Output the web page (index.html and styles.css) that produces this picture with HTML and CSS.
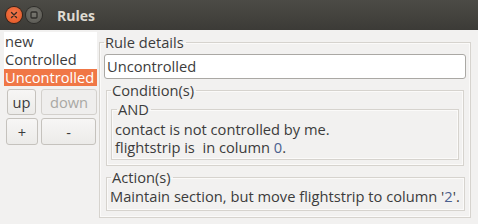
FILE: index.html
```html
<!DOCTYPE html>
<html>
<head>
<meta charset="utf-8">
<link rel="stylesheet" href="styles.css">
</head>
<body>
<div class="window">
  <div class="titlebar">
    <span class="wbtn close"><svg width="16" height="16" viewBox="0 0 16 16"><path d="M5.5 5.5 L10.5 10.5 M10.5 5.5 L5.5 10.5" stroke="#3a2a22" stroke-width="1.4" stroke-linecap="round"/></svg></span>
    <span class="wbtn mini"><svg width="16" height="16" viewBox="0 0 16 16"><rect x="5" y="5" width="6" height="6" rx="1" fill="none" stroke="#2e2d2a" stroke-width="1.3"/></svg></span>
    <span class="title">Rules</span>
  </div>
  <div class="content">
    <div class="left">
      <ul class="list">
        <li>new</li>
        <li>Controlled</li>
        <li class="sel">Uncontrolled</li>
      </ul>
      <div class="btnrow row1">
        <button class="btn b-up">up</button>
        <button class="btn b-down disabled">down</button>
      </div>
      <div class="btnrow row2">
        <button class="btn b-add">+</button>
        <button class="btn b-del">-</button>
      </div>
    </div>
    <fieldset class="frame details">
      <legend>Rule details</legend>
      <div class="entry">Uncontrolled</div>
      <fieldset class="frame cond">
        <legend>Condition(s)</legend>
        <fieldset class="frame andf">
          <legend>AND</legend>
          <div class="line">contact is not controlled by me.</div>
          <div class="line">flightstrip is&nbsp; in column <span class="num">0</span>.</div>
        </fieldset>
      </fieldset>
      <fieldset class="frame act">
        <legend>Action(s)</legend>
        <div class="line">Maintain section, but move flightstrip to column '<span class="num">2</span>'.</div>
      </fieldset>
    </fieldset>
  </div>
</div>
</body>
</html>
```
FILE: styles.css
```css
html, body {
  margin: 0;
  padding: 0;
}
body {
  width: 478px;
  height: 224px;
  overflow: hidden;
  background: #f2f1f0;
  font-family: "Open Sans", "DejaVu Sans", sans-serif;
  font-size: 14.67px;
  color: #3c3c3c;
}
.window {
  display: flex;
  flex-direction: column;
  height: 224px;
}
.titlebar {
  height: 30px;
  flex: none;
  display: flex;
  align-items: center;
  background: linear-gradient(#4c4b46, #3c3b37);
  padding-left: 6px;
  box-sizing: border-box;
}
.wbtn {
  width: 16px;
  height: 16px;
  border-radius: 50%;
  display: flex;
  margin-right: 4px;
}
.close {
  background: radial-gradient(circle at 50% 40%, #f47a4f, #e3531e);
  box-shadow: 0 0 0 1px #3a2015;
}
.mini {
  background: radial-gradient(circle at 50% 40%, #77766f, #55544f);
  box-shadow: 0 0 0 1px #2d2c29;
}
.title {
  margin-left: 11px;
  font-weight: bold;
  font-size: 14px;
  color: #dfdbd2;
  font-family: "Open Sans", sans-serif;
}
.content {
  display: flex;
  padding: 2px 0 0 4px;
  gap: 2px;
}
.left {
  width: 93px;
  flex: none;
}
.list {
  list-style: none;
  margin: 0;
  padding: 1px 0 0 0;
  background: #ffffff;
  height: 54px;
  box-sizing: border-box;
}
.list li {
  height: 18px;
  line-height: 17px;
  padding-left: 1px;
  white-space: nowrap;
}
.list li.sel {
  background: #f07746;
  color: #ffffff;
  height: 17px;
}
.btnrow {
  display: flex;
}
.row1 {
  margin-top: 3px;
  padding-left: 3px;
  gap: 5px;
}
.row2 {
  margin-top: 3px;
  padding-left: 2px;
  gap: 3px;
}
.btn {
  font: inherit;
  color: #3c3c3c;
  height: 26px;
  padding: 0;
  border: 1px solid #c5c2bd;
  border-radius: 3px;
  background: linear-gradient(#f7f6f5, #ecebe9);
  line-height: 22px;
}
.b-up { width: 29px; }
.b-down { width: 56px; }
.b-add { width: 32px; height: 27px; }
.b-del { width: 55px; height: 27px; }
.btn.disabled {
  color: #a9a8a4;
  background: #efeeed;
  border-color: #d3d0cc;
}
.frame {
  margin: 0;
  border: 1px solid #d6d3ce;
  box-shadow: inset 0 0 0 1px #fbfaf9;
  padding: 0;
  min-width: 0;
}
.frame legend {
  padding: 0 2px 0 1px;
  line-height: 16px;
  height: 16px;
}
.details {
  width: 372px;
  box-sizing: border-box;
  margin-top: 2px;
  padding: 4px 4px 6px 4px;
}
.entry {
  height: 25px;
  box-sizing: border-box;
  background: #fff;
  border: 1px solid #aaa8a4;
  border-radius: 3px;
  line-height: 23px;
  padding-left: 2px;
}
.cond {
  margin: 3px 2px 0 2px;
  padding: 3px 4px 5px 4px;
}
.andf {
  padding: 3px 3px 3px 3px;
}
.andf > legend {
  margin-left: 2px;
}
.line {
  line-height: 18px;
  white-space: nowrap;
}
.num {
  color: #4a5f8f;
}
.act {
  margin: 3px 1px 0 2px;
  padding: 2px 3px 5px 3px;
}
.act > legend {
  margin-left: 1px;
}
```
